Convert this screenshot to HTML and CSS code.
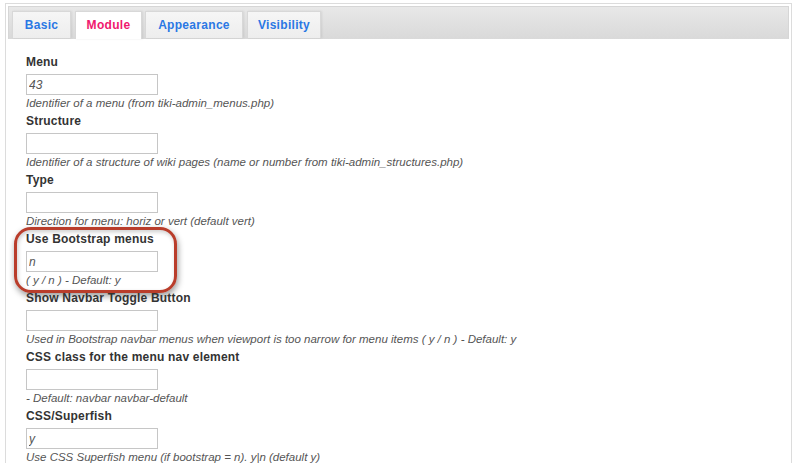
FILE: index.html
```html
<!DOCTYPE html>
<html lang="en">
<head>
  <meta charset="UTF-8">
  <title>Module Settings</title>
  <link rel="stylesheet" href="styles.css">
</head>
<body>
  <div class="panel">
    <!-- Tabs -->
    <ul class="tabs">
      <li class="tab tab-basic">Basic</li>
      <li class="tab tab-module active">Module</li>
      <li class="tab tab-appearance">Appearance</li>
      <li class="tab tab-visibility">Visibility</li>
    </ul>

    <!-- Module params -->
    <div class="params">
      <div class="param">
        <label for="menu">Menu</label>
        <input type="text" id="menu" class="field" value="43">
        <div class="hint">Identifier of a menu (from tiki-admin_menus.php)</div>
      </div>

      <div class="param">
        <label for="structure">Structure</label>
        <input type="text" id="structure" class="field">
        <div class="hint">Identifier of a structure of wiki pages (name or number from tiki-admin_structures.php)</div>
      </div>

      <div class="param">
        <label for="type">Type</label>
        <input type="text" id="type" class="field">
        <div class="hint">Direction for menu: horiz or vert (default vert)</div>
      </div>

      <div class="param highlighted">
        <label for="bootstrap">Use Bootstrap menus</label>
        <input type="text" id="bootstrap" class="field" value="n">
        <div class="hint">( y / n ) - Default: y</div>
        <span class="callout"></span>
      </div>

      <div class="param">
        <label for="navbarToggle">Show Navbar Toggle Button</label>
        <input type="text" id="navbarToggle" class="field">
        <div class="hint">Used in Bootstrap navbar menus when viewport is too narrow for menu items ( y / n ) - Default: y</div>
      </div>

      <div class="param">
        <label for="navClass">CSS class for the menu nav element</label>
        <input type="text" id="navClass" class="field">
        <div class="hint">- Default: navbar navbar-default</div>
      </div>

      <div class="param">
        <label for="superfish">CSS/Superfish</label>
        <input type="text" id="superfish" class="field" value="y">
        <div class="hint">Use CSS Superfish menu (if bootstrap = n). y|n (default y)</div>
      </div>
    </div>
  </div>
</body>
</html>
```

FILE: styles.css
```css
* {
  margin: 0;
  padding: 0;
  box-sizing: border-box;
  font-family: 'Liberation Sans', Arial, sans-serif;
}

body {
  background: #fff;
  color: #333;
  font-size: 12px;
  overflow: hidden;
}

/* Panel */
.panel {
  margin: 3px 8px 0 5px;
  padding: 2px;
  border: 1px solid #dcdcdc;
  border-bottom: none;
  min-height: 470px;
}

/* Tabs */
.tabs {
  list-style: none;
  display: flex;
  gap: 4px;
  height: 33px;
  padding: 4px 3px 0;
  border: 1px solid #d6d6d6;
  border-bottom: none;
  background: linear-gradient(#e8e8e8, #d9d9d9);
}

.tab {
  height: 27px;
  line-height: 26px;
  text-align: center;
  font-weight: 700;
  font-size: 12px;
  letter-spacing: 0.3px;
  color: #2a78e4;
  background: linear-gradient(#f6f6f6, #ededed);
  border: 1px solid #d8d8d8;
  border-bottom: none;
  box-shadow: 1px 0 2px rgba(0,0,0,0.08);
}

.tab-basic { width: 59px; }
.tab-module { width: 67px; margin-right: -1px; }
.tab-appearance { width: 98px; }
.tab-visibility { width: 74px; }

.tab.active {
  background: #fff;
  color: #f0186e;
  height: 28px;
}

/* Params */
.params {
  padding: 14px 18px 0;
}

.param {
  position: relative;
}

.param label {
  display: block;
  font-weight: 700;
  line-height: 18px;
  letter-spacing: 0.2px;
  margin-bottom: 3px;
  color: #333;
}

.field {
  display: block;
  width: 132px;
  height: 21px;
  padding: 0 2px;
  border: 1px solid #c6c6c6;
  font-size: 12px;
  font-style: italic;
  color: #555;
  background: #fff;
}

.hint {
  line-height: 17px;
  font-size: 11.5px;
  font-style: italic;
  color: #555;
  white-space: nowrap;
}

/* Red annotation around the highlighted param */
.callout {
  position: absolute;
  left: -12px;
  top: -3px;
  width: 163px;
  height: 66px;
  border: 3px solid #b93d2b;
  border-radius: 17px;
  box-shadow: 1px 3px 6px rgba(0,0,0,0.4), inset 1px 2px 4px rgba(0,0,0,0.2);
  pointer-events: none;
}
```
